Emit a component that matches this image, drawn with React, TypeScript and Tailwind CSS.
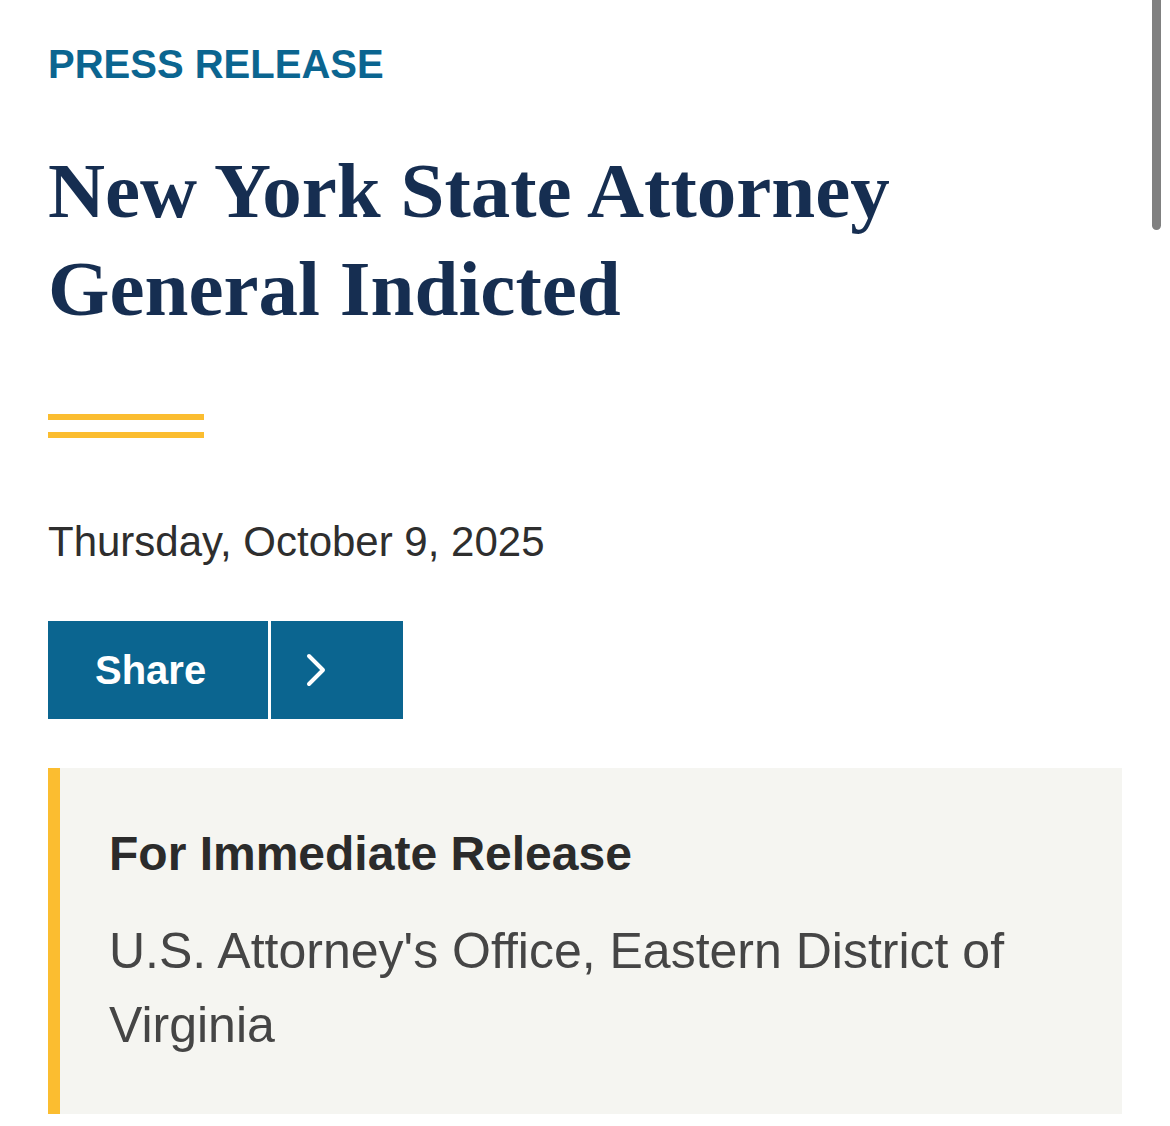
import { } from "react";

function ChevronRight() {
  return (
    <svg width="24" height="36" viewBox="0 0 24 36" fill="none" className="block">
      <polyline points="5,4 19,18 5,32" stroke="white" strokeWidth="4" strokeLinecap="round" strokeLinejoin="round" />
    </svg>
  );
}

export default function App() {
  return (
    <div className="relative min-h-[1126px] bg-white px-12 pt-[44px] font-['Liberation_Sans',Arial,sans-serif]">
      <p className="text-[40px] leading-[40px] font-bold text-[#0b6590]">PRESS RELEASE</p>

      <h1 className="mt-[58px] font-['Liberation_Serif','Times_New_Roman',serif] text-[79px] leading-[98px] font-bold text-[#162e51]">
        New York State Attorney
        <br />
        General Indicted
      </h1>

      <div className="mt-[76px] flex w-[156px] flex-col gap-3">
        <div className="h-[6px] bg-[#fbbd30]" />
        <div className="h-[6px] bg-[#fbbd30]" />
      </div>

      <p className="mt-[80px] text-[42px] leading-[48px] text-[#2e2e2e]">Thursday, October 9, 2025</p>

      <div className="mt-[55px] flex h-[98px] gap-[3px]">
        <button className="w-[220px] bg-[#0b6590] pl-[47px] text-left text-[40px] font-bold text-white">Share</button>
        <button className="flex w-[132px] items-center bg-[#0b6590] pl-[33px]">
          <ChevronRight />
        </button>
      </div>

      <div className="mt-[49px] w-[1074px] border-l-[12px] border-[#fbbd30] bg-[#f5f5f1] pt-[58px] pb-[52px] pl-[49px] pr-10">
        <p className="text-[48px] leading-[56px] font-bold text-[#2b2b2b]">For Immediate Release</p>
        <p className="mt-[32px] text-[50px] leading-[74px] text-[#454545]">
          U.S. Attorney's Office, Eastern District of Virginia
        </p>
      </div>

      <div className="absolute top-0 right-[9px] h-[230px] w-[9px] rounded-b-full bg-[#808080]" />
    </div>
  );
}
